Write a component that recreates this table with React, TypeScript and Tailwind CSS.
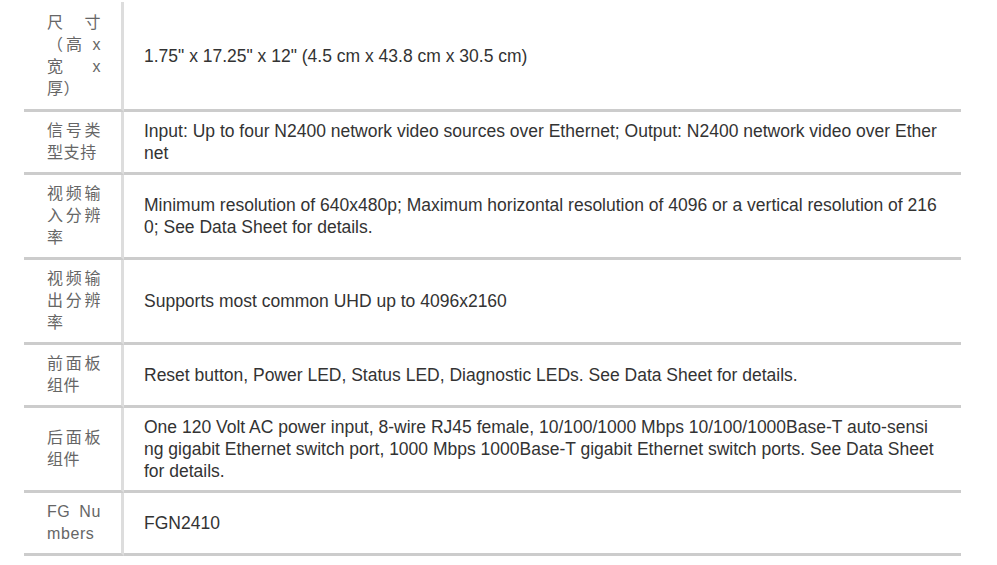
const rows: { label: string[]; value: string[] }[] = [
  {
    label: ["尺寸", "（高 x", "宽 x", "厚）"],
    value: ["1.75\" x 17.25\" x 12\" (4.5 cm x 43.8 cm x 30.5 cm)"],
  },
  {
    label: ["信号类", "型支持"],
    value: [
      "Input: Up to four N2400 network video sources over Ethernet; Output: N2400 network video over Ether",
      "net",
    ],
  },
  {
    label: ["视频输", "入分辨", "率"],
    value: [
      "Minimum resolution of 640x480p; Maximum horizontal resolution of 4096 or a vertical resolution of 216",
      "0; See Data Sheet for details.",
    ],
  },
  {
    label: ["视频输", "出分辨", "率"],
    value: ["Supports most common UHD up to 4096x2160"],
  },
  {
    label: ["前面板", "组件"],
    value: ["Reset button, Power LED, Status LED, Diagnostic LEDs. See Data Sheet for details."],
  },
  {
    label: ["后面板", "组件"],
    value: [
      "One 120 Volt AC power input, 8-wire RJ45 female, 10/100/1000 Mbps 10/100/1000Base-T auto-sensi",
      "ng gigabit Ethernet switch port, 1000 Mbps 1000Base-T gigabit Ethernet switch ports. See Data Sheet",
      "for details.",
    ],
  },
  {
    label: ["FG Nu", "mbers"],
    value: ["FGN2410"],
  },
];

export default function App() {
  return (
    <div className="w-[997px] h-[565px] bg-white overflow-hidden pt-[2px] font-['Liberation_Sans','Noto_Sans_CJK_SC',sans-serif] leading-[22px]">
      <div className="ml-[24px] w-[937px]">
        {rows.map((row, i) => (
          <div key={i} className="flex">
            {/* Label cell */}
            <div
              className={`w-[100px] shrink-0 border-r-[3px] border-b-[3px] border-r-[#dddddd] border-b-[#cccccc] pl-[23px] pr-[20px] text-[16px] text-[#666666] tracking-[0.6px] flex flex-col justify-center ${
                i === 0 ? "pt-[10px] pb-[9px]" : "py-[8px]"
              }`}
            >
              {row.label.map((line, j) => (
                <div
                  key={j}
                  className={
                    j < row.label.length - 1
                      ? "text-justify [text-align-last:justify] whitespace-nowrap"
                      : "whitespace-nowrap"
                  }
                >
                  {line}
                </div>
              ))}
            </div>

            {/* Value cell */}
            <div className="flex-1 min-w-0 border-b-[3px] border-[#cccccc] px-[20px] py-[8px] flex flex-col justify-center text-[17.5px] text-[#333333]">
              {row.value.map((line, j) => (
                <div key={j} className="whitespace-nowrap">
                  {line}
                </div>
              ))}
            </div>
          </div>
        ))}
      </div>
    </div>
  );
}
